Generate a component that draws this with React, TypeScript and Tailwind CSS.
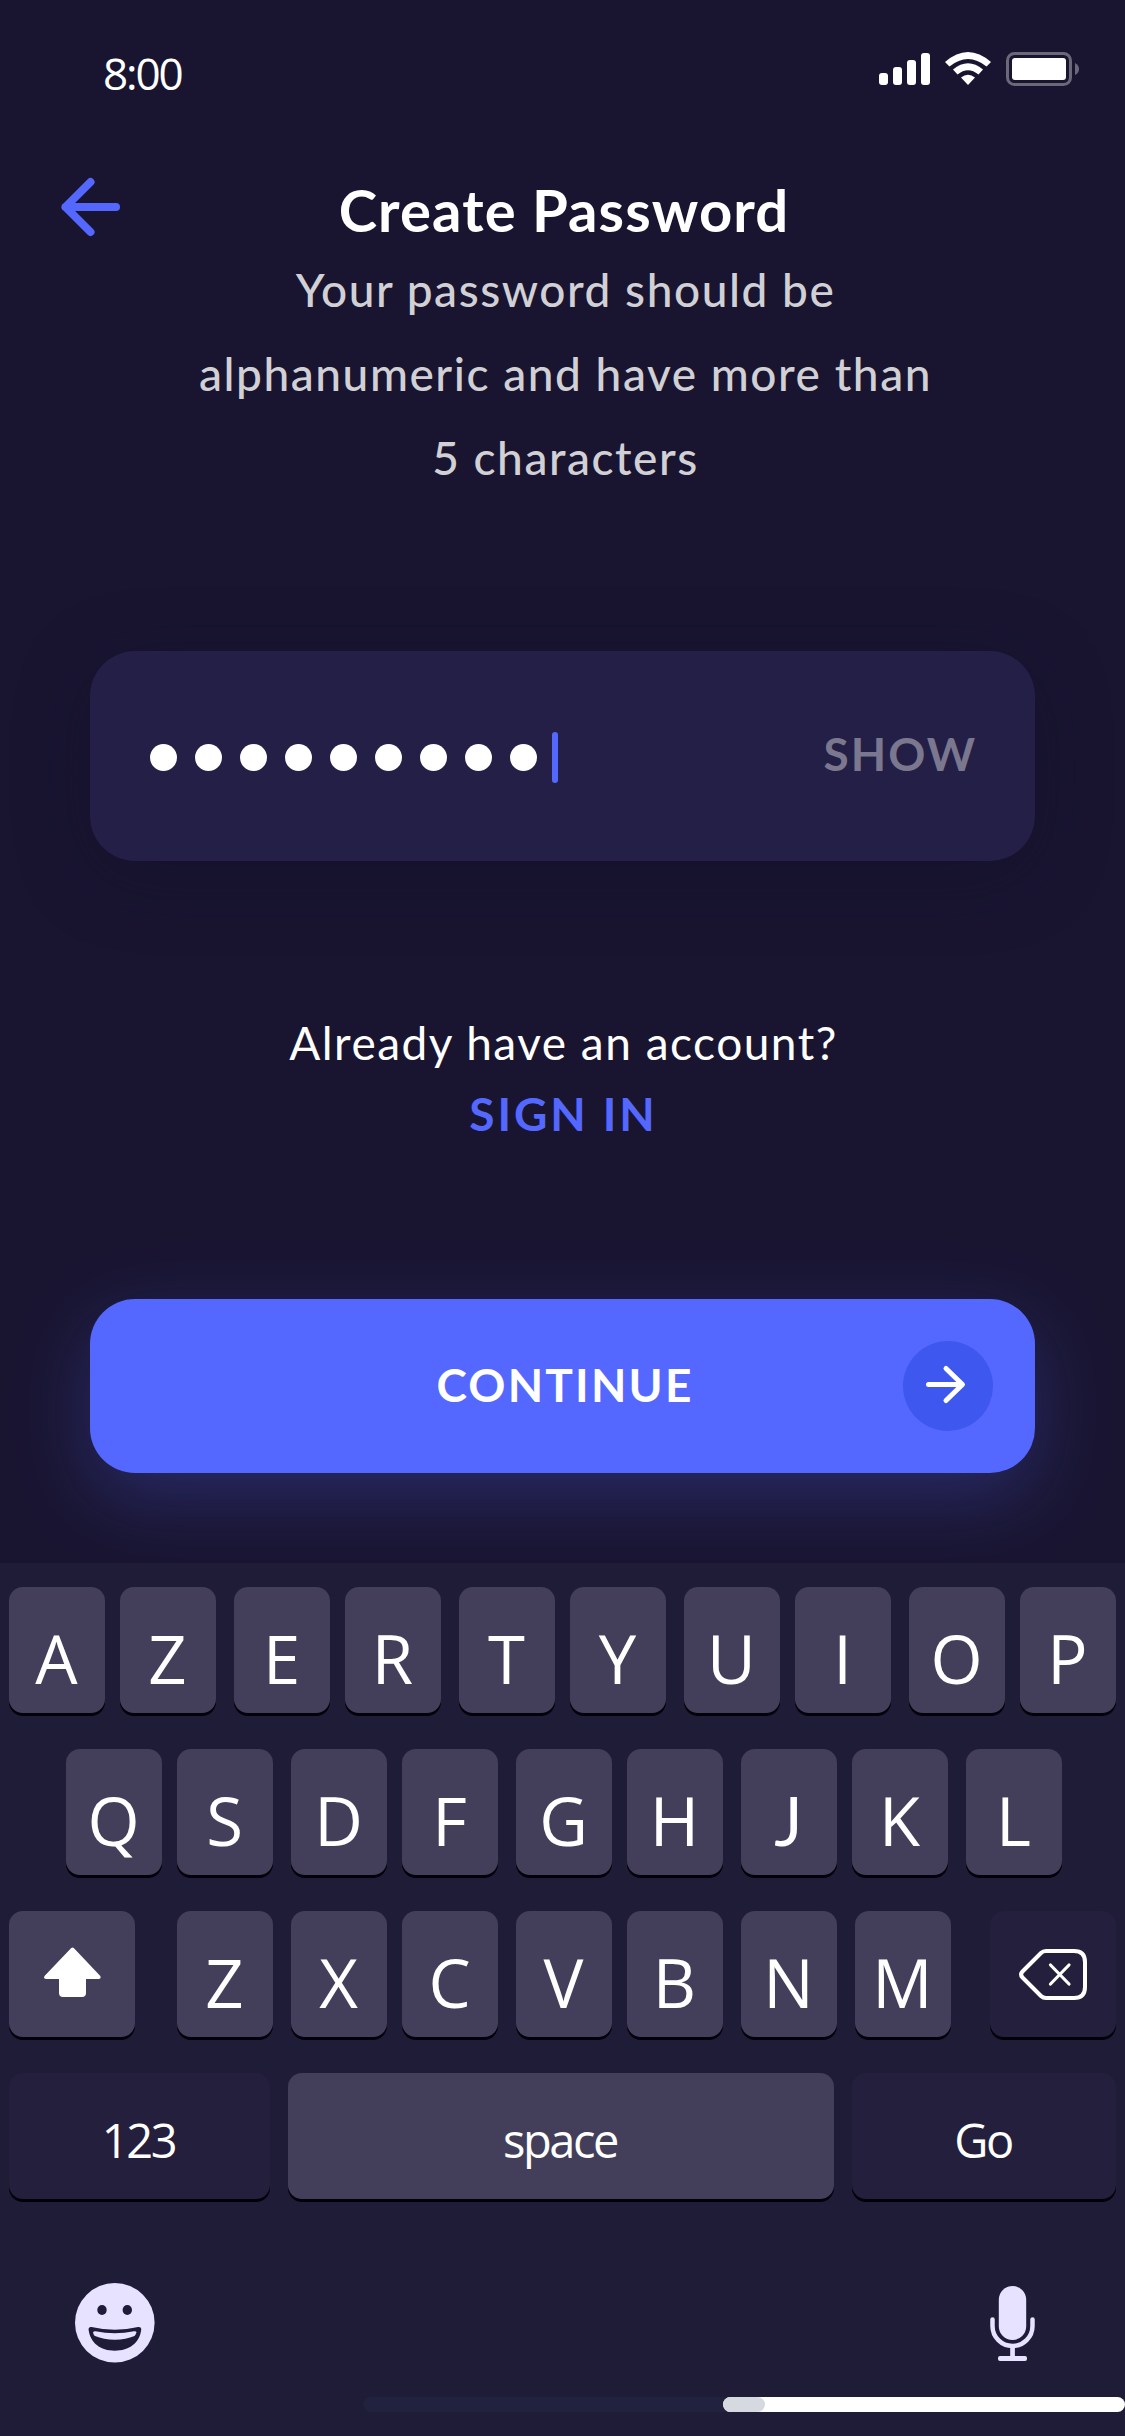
import React from "react";

function StatusBar() {
  return (
    <div className="flex h-[150px] justify-between pl-[103px] pr-[46px]">
      <span className="mt-[43px] h-[60px] font-['Open_Sans',sans-serif] text-[44px] leading-[60px] tracking-[-2.1px]">8:00</span>
      <svg className="mt-[50px] h-[40px] w-[202px]" viewBox="877 50 202 40" fill="#fff">
        <rect x="879" y="73" width="9" height="12" rx="3" />
        <rect x="893" y="67" width="9" height="18" rx="3" />
        <rect x="907" y="60" width="9" height="25" rx="3" />
        <rect x="921" y="53" width="9" height="32" rx="3" />
        <path d="M945 62Q968 42 991 62L986.500 66.500Q968 51.500 949.500 66.500Z" />
        <path d="M953 69.500Q968 57 983 69.500L978.500 74.500Q968 66 957.500 74.500Z" />
        <path d="M961 77.500Q968 72 975 77.500L968 85Z" />
        <rect x="1007.500" y="53.500" width="63" height="31" rx="7" fill="none" stroke="#6b6879" strokeWidth="3" />
        <rect x="1012" y="58" width="54" height="22" rx="3" />
        <path d="M1075 63Q1079 65 1079 69T1075 75Z" fill="#6b6879" />
      </svg>
    </div>
  );
}

function Header() {
  return (
    <header className="grid h-[98px] grid-cols-[200px_1fr_200px]">
      <svg className="ml-[59px] mt-[26px] h-[62px] w-[64px]" viewBox="59 176 64 62" fill="none" stroke="#5468ff" strokeWidth="8" strokeLinecap="round" strokeLinejoin="round">
        <path d="M90.500 182 65.500 207l25 25M65.500 207H116" />
      </svg>
      <h1 className="mt-[30px] whitespace-nowrap pl-[3px] text-center text-[58px] font-bold leading-[60px] tracking-[1.1px]">Create Password</h1>
    </header>
  );
}

const SHADOW = "shadow-[0_3px_0_#020008]";
const LIGHT = "bg-[#433f5b]";
const DARK = "bg-[#231f3c]";

function Key({ label }: { label: string }) {
  const face = label === "J" ? "font-['Lato',sans-serif]" : "font-['Open_Sans',sans-serif]";
  return (
    <div className={`flex h-[126px] w-[96px] shrink-0 justify-center rounded-[14px] pr-[1px] pt-[15px] text-[67px] leading-[112px] ${LIGHT} ${SHADOW} ${face}`}>
      {label}
    </div>
  );
}

function KeyGroup({ labels }: { labels: string }) {
  return (
    <div className="flex gap-[15px]">
      {labels.split("").map((l) => (
        <Key key={l} label={l} />
      ))}
    </div>
  );
}

function WideKey({ label, look }: { label: string; look: string }) {
  return (
    <div className={`flex h-[126px] justify-center rounded-[14px] pr-[2px] pt-[7px] font-['Open_Sans',sans-serif] text-[47px] leading-[120px] tracking-[-2.4px] ${SHADOW} ${look}`}>
      {label}
    </div>
  );
}

function Keyboard() {
  return (
    <section className="flex h-[873px] flex-col bg-[#1f1c38] pt-[24px]">
      <div className="flex flex-col gap-[36px] px-[9px]">
        <div className="flex gap-[18px]">
          {["AZ", "ER", "TY", "UI", "OP"].map((p) => (
            <KeyGroup key={p} labels={p} />
          ))}
        </div>
        <div className="flex gap-[18px] pl-[57px]">
          {["QS", "DF", "GH", "JK", "L"].map((p) => (
            <KeyGroup key={p} labels={p} />
          ))}
        </div>
        <div className="flex justify-between">
          <div className={`h-[126px] w-[126px] rounded-[14px] ${LIGHT} ${SHADOW}`}>
            <svg viewBox="9 1911 126 126" fill="#fff" className="h-full w-full">
              <path d="M71 1948.200Q72.500 1946.700 74 1948.200L100.300 1976Q101.500 1979 98.500 1979H86V1993Q86 1997 82 1997H63Q59 1997 59 1993V1979H46.500Q43 1979 44.500 1976Z" />
            </svg>
          </div>
          <div className="ml-[3px] flex gap-[18px]">
            {["Z", "XC", "VB", "N", "M"].map((p) => (
              <KeyGroup key={p} labels={p} />
            ))}
          </div>
          <div className={`h-[126px] w-[126px] rounded-[14px] ${DARK} ${SHADOW}`}>
            <svg viewBox="990 1911 126 126" fill="none" stroke="#fff" strokeWidth="4" strokeLinecap="round" strokeLinejoin="round" className="h-full w-full">
              <path d="M1046 1951H1074Q1085 1951 1085 1962V1987Q1085 1998 1074 1998H1046Q1043 1998 1041 1996L1022.500 1977.500Q1019.500 1974.500 1022.500 1971.500L1041 1953Q1043 1951 1046 1951Z" />
              <path d="M1050.500 1965l18.500 19M1069 1965l-18.500 19" strokeWidth="3.200" />
            </svg>
          </div>
        </div>
        <div className="flex gap-[18px]">
          <WideKey label="123" look="w-[261px] bg-[#231f3c]" />
          <WideKey label="space" look="w-[546px] bg-[#433f5b]" />
          <WideKey label="Go" look="w-[264px] bg-[#231f3c]" />
        </div>
      </div>
      <div className="flex h-[198px] items-start justify-between pl-[75px] pr-[88px] pt-[82px]">
        <svg className="h-[84px] w-[80px]" viewBox="75 2281 80 84">
          <circle cx="114.800" cy="2322.800" r="39.800" fill="#e6e2ff" />
          <g fill="#1f1c38">
            <ellipse cx="102" cy="2310" rx="4.700" ry="5" />
            <ellipse cx="127.300" cy="2310" rx="4.700" ry="5" />
            <path d="M88.500 2329Q89 2326.500 91.500 2327Q114.800 2332.500 138 2327Q141 2326.500 141.300 2329C140 2343 129 2350.700 114.800 2350.700S90 2343 88.500 2329Z" />
          </g>
          <path d="M93 2332.500Q93.500 2331 95.500 2331.200Q114.800 2335.500 134 2331.200Q136.500 2331 136.500 2332.500Q135.500 2335 134.500 2336Q126 2339.700 114.800 2339.700T95 2336Q93.500 2335 93 2332.500Z" fill="#e6e2ff" />
        </svg>
        <svg className="mt-[3px] h-[80px] w-[49px]" viewBox="988 2284 49 80" fill="#e6e2ff">
          <rect x="998.800" y="2286" width="27.400" height="54" rx="13.700" />
          <path d="M992.500 2319.500V2326A20 20 0 0 0 1032.500 2326V2319.500" fill="none" stroke="#e6e2ff" strokeWidth="4.500" strokeLinecap="round" />
          <path d="M1010.200 2346h4.700v11h-4.700z" />
          <rect x="998" y="2356" width="29" height="5" rx="2" />
        </svg>
      </div>
      <div className="flex pl-[363px]">
        <div className="h-[15px] w-[402px] rounded-[8px] bg-[#21223d]" />
        <div className="-ml-[42px] h-[15px] w-[402px] rounded-[8px] bg-white">
          <div className="h-[15px] w-[42px] rounded-[8px] bg-[#d6d9df]" />
        </div>
      </div>
    </section>
  );
}

export default function App() {
  return (
    <main className="h-[2436px] w-[1125px] overflow-hidden bg-[#191531] font-['Lato',sans-serif] text-white">
      <StatusBar />
      <Header />
      <p className="h-[403px] pl-[6px] text-center text-[46px] font-medium leading-[84px] tracking-[1.55px] text-[#d1d0d5]">
        Your password should be
        <br />
        alphanumeric and have more than
        <br />5 characters
      </p>
      <div className="mx-[90px] flex h-[210px] items-center justify-between rounded-[45px] bg-[#231f46] pl-[60px] pr-[58px] shadow-[0_15px_72px_rgba(18,16,38,0.4)]">
        <div className="flex items-center pt-[3px]">
          <div className="flex gap-[18px]">
            {Array.from({ length: 9 }, (_, i) => (
              <span key={i} className="h-[27px] w-[27px] rounded-full bg-white" />
            ))}
          </div>
          <span className="ml-[15px] h-[51px] w-[6px] rounded-[3px] bg-[#5468ff]" />
        </div>
        <span className="pb-[4px] text-[46px] font-bold leading-[60px] tracking-[2px] text-[#7b778f]">SHOW</span>
      </div>
      <div className="flex h-[438px] flex-col items-center pl-[2px] pt-[146px]">
        <span className="text-[46px] leading-[71px] tracking-[1.5px]">Already have an account?</span>
        <span className="text-[46px] font-bold leading-[72px] tracking-[2.9px] text-[#5468ff]">SIGN IN</span>
      </div>
      <div className="mx-[90px] mb-[90px] grid h-[174px] grid-cols-[132px_1fr_132px] items-center rounded-[45px] bg-[#5468ff] shadow-[0_24px_76px_rgba(84,104,255,0.26)]">
        <span className="col-start-2 pb-[3px] pl-[5px] text-center text-[46px] font-bold leading-[60px] tracking-[2.2px]">CONTINUE</span>
        <span className="flex h-[90px] w-[90px] items-center justify-center rounded-full bg-[#3d57ef]">
          <svg viewBox="903 1341 90 90" fill="none" stroke="#fff" strokeWidth="5" strokeLinecap="round" strokeLinejoin="round" className="h-full w-full">
            <path d="M928.500 1384.500H962M946 1368.500l16.500 16-16.500 16" />
          </svg>
        </span>
      </div>
      <Keyboard />
    </main>
  );
}
